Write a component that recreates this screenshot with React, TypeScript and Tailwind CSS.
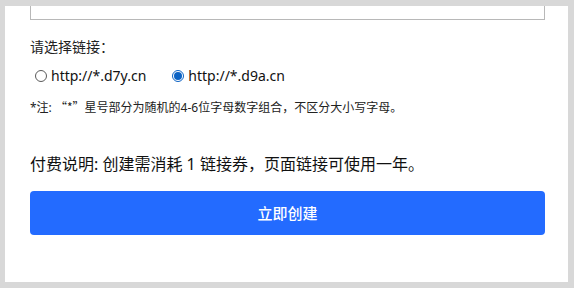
import React from "react";

const font = { fontFamily: '"Noto Sans", "Noto Sans CJK SC", sans-serif' };

function Radio({ checked, label }: { checked?: boolean; label: string }) {
  return (
    <label className="flex items-center gap-[4px]">
      {checked ? (
        <span className="flex h-[12px] w-[12px] items-center justify-center rounded-full border border-[#0b62c4] bg-white">
          <span className="h-[8px] w-[8px] rounded-full bg-[#0b62c4]" />
        </span>
      ) : (
        <span className="h-[12px] w-[12px] rounded-full border border-[#5a5a5a] bg-white" />
      )}
      <span className="text-[14px] leading-[20px] text-[#111]">{label}</span>
    </label>
  );
}

export default function App() {
  return (
    <div className="h-[288px] w-[574px] bg-[#d8d8d8] pl-[5px] pt-[6px]" style={font}>
      <div className="h-[276px] w-[563px] overflow-hidden bg-white pl-[25px] pr-[23px]">
        <div className="h-[14px] border-x border-b border-[#b8b8b8]" />

        <p className="mt-[17px] text-[14px] leading-[20px] text-[#222]">请选择链接：</p>

        <div className="mt-[9px] flex items-center pl-[5px]">
          <Radio label="http://*.d7y.cn" />
          <div className="ml-[26px]">
            <Radio checked label="http://*.d9a.cn" />
          </div>
        </div>

        <p className="mt-[13px] text-[12px] leading-[16px] text-[#222]">
          *注:{" "}
          <span className="font-['Noto_Sans_CJK_SC',sans-serif]">“*”</span>
          星号部分为随机的4-6位字母数字组合，不区分大小写字母。
        </p>

        <p className="mt-[36px] text-[16px] leading-[24px] text-[#111]">
          付费说明: 创建需消耗 1 链接券，页面链接可使用一年。
        </p>

        <button className="mt-[15px] flex h-[44px] w-full items-center justify-center rounded-[4px] bg-[#236bff] text-[15px] font-medium text-white">
          立即创建
        </button>
      </div>
    </div>
  );
}
